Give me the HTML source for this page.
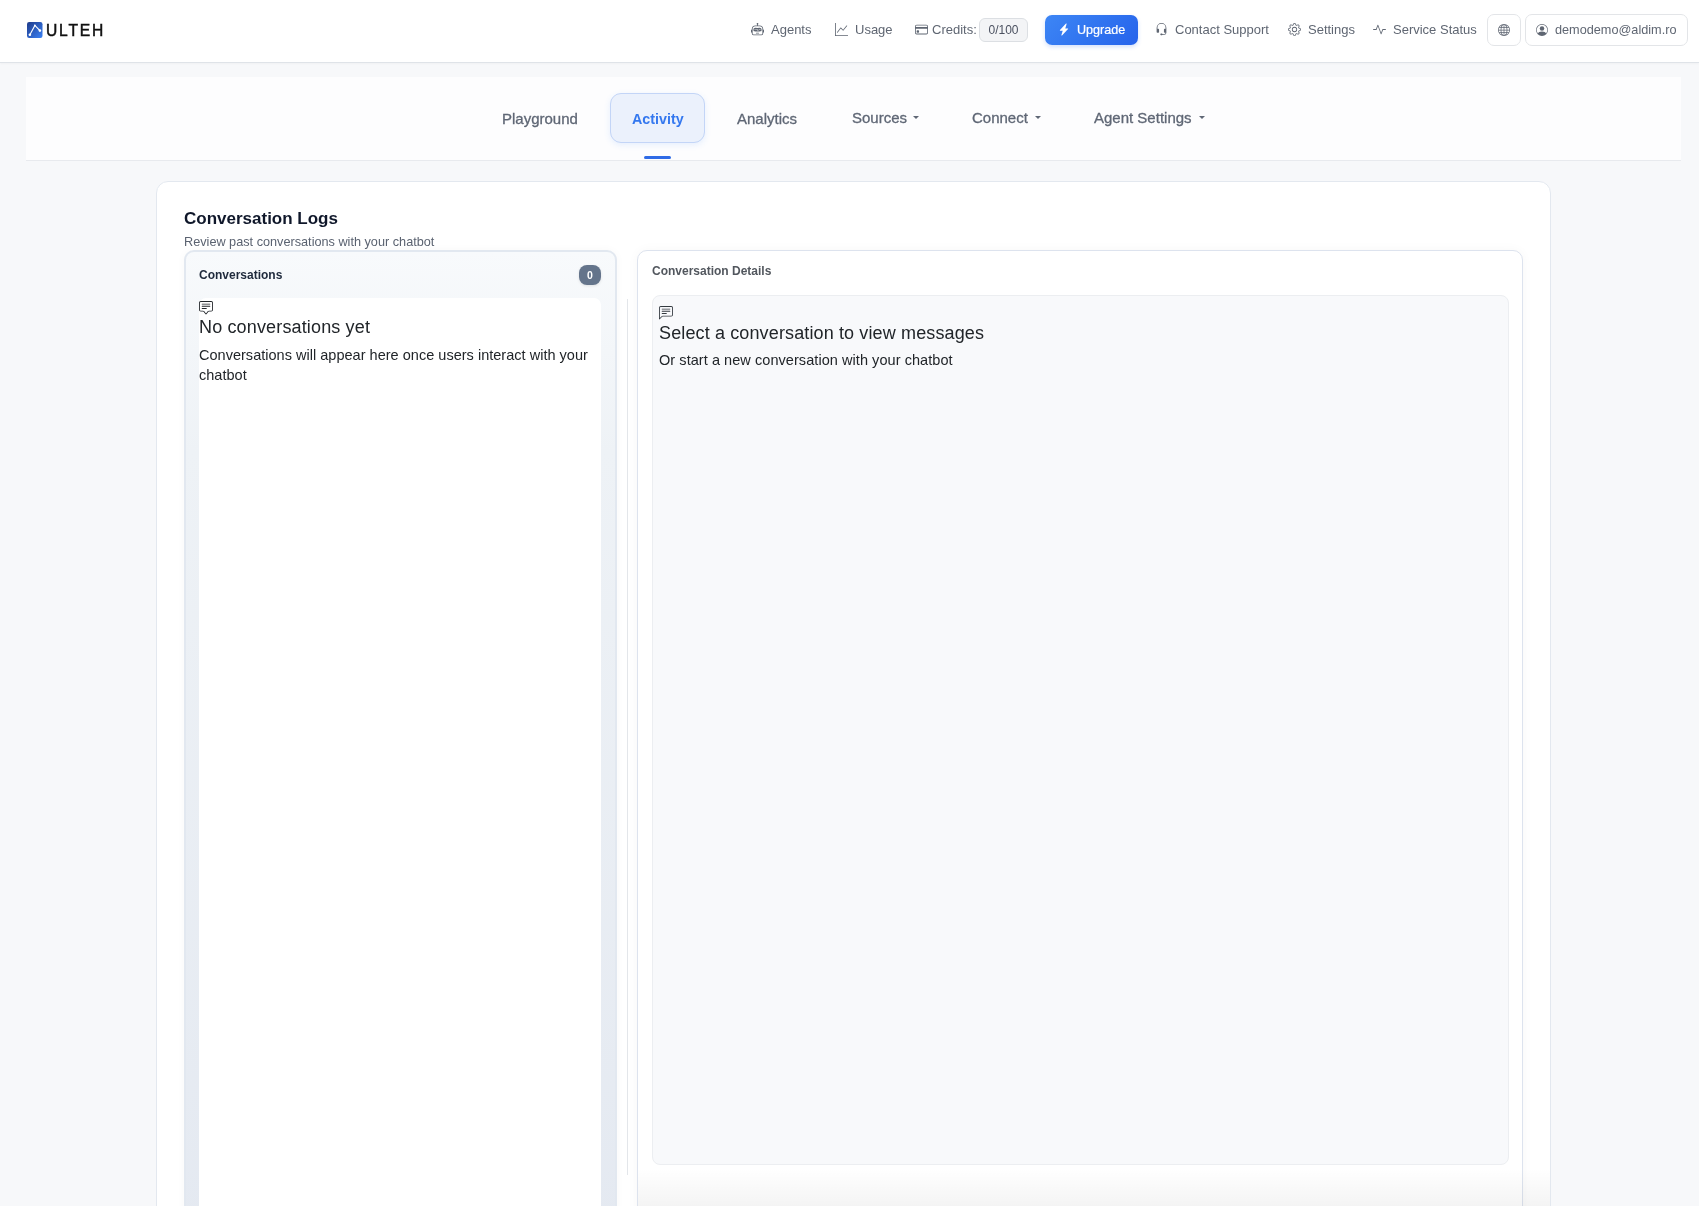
<!DOCTYPE html>
<html>
<head>
<meta charset="utf-8">
<style>
*{box-sizing:border-box;margin:0;padding:0}
html,body{width:1699px;height:1206px;overflow:hidden}
body{will-change:transform;background:#f7f8fa;font-family:"Liberation Sans",sans-serif;position:relative;color:#212529}
.abs{position:absolute}
.t{position:absolute;white-space:nowrap;line-height:16px}
#hdr{position:absolute;left:0;top:0;width:1699px;height:63px;background:#fff;border-bottom:1px solid #dfe3e8;box-shadow:0 1px 2px rgba(0,0,0,.03)}
.hi{position:absolute;font-size:13px;color:#5f6672;line-height:16px;white-space:nowrap}
.ic{position:absolute}
.badge{position:absolute;left:979px;top:18px;width:49px;height:24px;border:1px solid #dcdfe3;background:#f3f4f6;border-radius:6px;font-size:12px;color:#4b5160;text-align:center;line-height:23px}
.upg{position:absolute;left:1045px;top:15px;width:93px;height:30px;border-radius:7px;background:linear-gradient(135deg,#3d86f5,#2563eb);box-shadow:0 2px 4px rgba(37,99,235,.2)}
.obtn{position:absolute;top:14px;height:32px;border:1px solid #e3e5e8;border-radius:7px;background:#fff}
#nav{position:absolute;left:26px;top:77px;width:1655px;height:84px;background:#fdfdfe;border-bottom:1px solid #e8eaee}
.tab{position:absolute;font-size:15px;color:#5f6775;line-height:18px;white-space:nowrap;-webkit-text-stroke:.3px #5f6775}
.pill{position:absolute;left:610px;top:93px;width:95px;height:50px;border-radius:11px;background:#ebf1fc;border:1px solid #c3d5f7;box-shadow:0 2px 6px rgba(59,130,246,.12)}
.caret{position:absolute;width:0;height:0;border-left:3px solid transparent;border-right:3px solid transparent;border-top:3.5px solid #5f6775}
#card{position:absolute;left:156px;top:181px;width:1395px;height:1100px;background:#fff;border:1px solid #e3e8ef;border-radius:12px}
#lp{position:absolute;left:184px;top:250px;width:433px;height:1000px;border:2px solid #e2e8f0;border-radius:10px;background:linear-gradient(180deg,#f8fafc 0%,#eef2f6 20%,#e4e9f1 100%);box-shadow:0 0 10px rgba(0,0,0,.03)}
#list{position:absolute;left:199px;top:298px;width:402px;height:950px;background:#fff;border-radius:7px}
#div{position:absolute;left:627px;top:299px;width:1px;height:876px;background:#e3e6ea}
#rp{position:absolute;left:637px;top:250px;width:886px;height:1000px;border:1px solid #dde3ee;border-radius:10px;background:#fff;box-shadow:0 0 12px rgba(0,0,0,.035)}
#box{position:absolute;left:652px;top:295px;width:857px;height:870px;background:#f8f9fb;border:1px solid #eceef1;border-radius:8px}
</style>
</head>
<body>
<div id="hdr"></div>
<!-- logo -->
<svg class="ic" style="left:27px;top:22px" width="16" height="16" viewBox="0 0 16 16">
  <defs><linearGradient id="lg" x1="0" y1="0" x2="1" y2="1"><stop offset="0" stop-color="#1e3a8a"/><stop offset="1" stop-color="#3b82f6"/></linearGradient></defs>
  <rect x="0" y="0" width="15.5" height="16" rx="2.2" fill="url(#lg)"/>
  <polyline points="2.9,12.7 7.9,3.4 12.9,8.6" fill="none" stroke="#fff" stroke-width="1.1"/>
  <circle cx="2.9" cy="12.7" r="1.3" fill="#fff"/><circle cx="7.9" cy="3.4" r="0.9" fill="#fff"/><circle cx="12.9" cy="8.6" r="1.3" fill="#fff"/>
</svg>
<div class="t" style="left:46px;top:21px;font-size:15.6px;letter-spacing:1.85px;color:#111;line-height:20px;-webkit-text-stroke:.5px #111">ULTEH</div>

<!-- header nav -->
<svg class="ic" style="left:751px;top:23px" width="13" height="13" viewBox="0 0 16 16" fill="#5f6672"><path d="M6 12.5a.5.5 0 0 1 .5-.5h3a.5.5 0 0 1 0 1h-3a.5.5 0 0 1-.5-.5M3 8.062C3 6.76 4.235 5.765 5.53 5.886a26.6 26.6 0 0 0 4.94 0C11.765 5.765 13 6.760 13 8.062v1.157a.93.93 0 0 1-.765.935c-.845.147-2.34.346-4.235.346s-3.390-.2-4.235-.346A.93.93 0 0 1 3 9.219zm4.542-.827a.25.25 0 0 0-.217.068l-.92.9a25 25 0 0 1-1.871-.183.25.25 0 0 0-.068.495c.55.076 1.232.149 2.02.193a.25.25 0 0 0 .189-.071l.754-.736.847 1.71a.25.25 0 0 0 .404.062l.932-.97a25 25 0 0 0 1.922-.188.25.25 0 0 0-.068-.495c-.538.074-1.207.145-1.98.189a.25.25 0 0 0-.166.076l-.754.785-.842-1.7a.25.25 0 0 0-.182-.135"/><path d="M8.5 1.866a1 1 0 1 0-1 0V3h-2A4.5 4.5 0 0 0 1 7.5V8a1 1 0 0 0-1 1v2a1 1 0 0 0 1 1v1a2 2 0 0 0 2 2h10a2 2 0 0 0 2-2v-1a1 1 0 0 0 1-1V9a1 1 0 0 0-1-1v-.5A4.5 4.5 0 0 0 10.5 3h-2zM14 7.5V13a1 1 0 0 1-1 1H3a1 1 0 0 1-1-1V7.5A3.5 3.5 0 0 1 5.5 4h5A3.5 3.5 0 0 1 14 7.5"/></svg>
<div class="hi" style="left:771px;top:22px">Agents</div>
<svg class="ic" style="left:835px;top:23px" width="13" height="13" viewBox="0 0 16 16" fill="#5f6672"><path d="M0 0h1v15h15v1H0zm14.817 3.113a.5.5 0 0 1 .07.704l-4.5 5.5a.5.5 0 0 1-.74.037L7.06 6.767l-3.656 5.027a.5.5 0 0 1-.808-.588l4-5.5a.5.5 0 0 1 .758-.06l2.609 2.61 4.15-5.073a.5.5 0 0 1 .704-.07"/></svg>
<div class="hi" style="left:855px;top:22px">Usage</div>
<svg class="ic" style="left:915px;top:23px" width="13" height="13" viewBox="0 0 16 16" fill="#5f6672"><path d="M0 4a2 2 0 0 1 2-2h12a2 2 0 0 1 2 2v8a2 2 0 0 1-2 2H2a2 2 0 0 1-2-2zm2-1a1 1 0 0 0-1 1v1h14V4a1 1 0 0 0-1-1zm13 4H1v5a1 1 0 0 0 1 1h12a1 1 0 0 0 1-1z"/><path d="M2 10a1 1 0 0 1 1-1h1a1 1 0 0 1 1 1v1a1 1 0 0 1-1 1H3a1 1 0 0 1-1-1z"/></svg>
<div class="hi" style="left:932px;top:22px">Credits:</div>
<div class="badge">0/100</div>
<div class="upg"></div>
<svg class="ic" style="left:1058px;top:23px" width="12" height="13" viewBox="0 0 16 16" fill="#fff"><path d="M11.251.068a.5.5 0 0 1 .227.58L9.677 6.5H13a.5.5 0 0 1 .364.843l-8 8.5a.5.5 0 0 1-.842-.49L6.323 9.5H3a.5.5 0 0 1-.364-.843l8-8.5a.5.5 0 0 1 .615-.09z"/></svg>
<div class="hi" style="left:1077px;top:22px;color:#fff;font-size:12.6px;-webkit-text-stroke:.2px #fff">Upgrade</div>
<svg class="ic" style="left:1155px;top:23px" width="13" height="13" viewBox="0 0 16 16" fill="#5f6672"><path d="M8 1a5 5 0 0 0-5 5v1h1a1 1 0 0 1 1 1v3a1 1 0 0 1-1 1H3a1 1 0 0 1-1-1V6a6 6 0 1 1 12 0v6a2.5 2.5 0 0 1-2.5 2.5H9.366a1 1 0 0 1-.866.5h-1a1 1 0 1 1 0-2h1a1 1 0 0 1 .866.5H11.5A1.5 1.5 0 0 0 13 12h-1a1 1 0 0 1-1-1V8a1 1 0 0 1 1-1h1V6a5 5 0 0 0-5-5"/></svg>
<div class="hi" style="left:1175px;top:22px">Contact Support</div>
<svg class="ic" style="left:1288px;top:23px" width="13" height="13" viewBox="0 0 16 16" fill="#5f6672"><path d="M8 4.754a3.246 3.246 0 1 0 0 6.492 3.246 3.246 0 0 0 0-6.492M5.754 8a2.246 2.246 0 1 1 4.492 0 2.246 2.246 0 0 1-4.492 0"/><path d="M9.796 1.343c-.527-1.79-3.065-1.79-3.592 0l-.094.319a.873.873 0 0 1-1.255.52l-.292-.16c-1.64-.892-3.433.902-2.54 2.541l.159.292a.873.873 0 0 1-.52 1.255l-.319.094c-1.79.527-1.79 3.065 0 3.592l.319.094a.873.873 0 0 1 .52 1.255l-.16.292c-.892 1.64.901 3.434 2.541 2.540l.292-.159a.873.873 0 0 1 1.255.52l.094.319c.527 1.79 3.065 1.79 3.592 0l.094-.319a.873.873 0 0 1 1.255-.52l.292.16c1.64.893 3.434-.902 2.54-2.541l-.159-.292a.873.873 0 0 1 .52-1.255l.319-.094c1.79-.527 1.79-3.065 0-3.592l-.319-.094a.873.873 0 0 1-.52-1.255l.16-.292c.893-1.64-.902-3.433-2.541-2.540l-.292.159a.873.873 0 0 1-1.255-.52zm-2.633.283c.246-.835 1.428-.835 1.674 0l.094.319a1.873 1.873 0 0 0 2.693 1.115l.291-.16c.764-.415 1.6.42 1.184 1.185l-.159.292a1.873 1.873 0 0 0 1.116 2.692l.318.094c.835.246.835 1.428 0 1.674l-.319.094a1.873 1.873 0 0 0-1.115 2.693l.16.291c.415.764-.42 1.6-1.185 1.184l-.291-.159a1.873 1.873 0 0 0-2.693 1.116l-.094.318c-.246.835-1.428.835-1.674 0l-.094-.319a1.873 1.873 0 0 0-2.692-1.115l-.292.16c-.764.415-1.6-.42-1.184-1.185l.159-.291A1.873 1.873 0 0 0 1.945 8.93l-.319-.094c-.835-.246-.835-1.428 0-1.674l.319-.094A1.873 1.873 0 0 0 3.06 4.377l-.16-.292c-.415-.764.42-1.6 1.185-1.184l.292.159a1.873 1.873 0 0 0 2.692-1.115z"/></svg>
<div class="hi" style="left:1308px;top:22px">Settings</div>
<svg class="ic" style="left:1373px;top:23px" width="13" height="13" viewBox="0 0 16 16" fill="#5f6672"><path d="M6 2a.5.5 0 0 1 .47.33L10 12.036l1.53-4.208A.5.5 0 0 1 12 7.5h3.5a.5.5 0 0 1 0 1h-3.15l-1.88 5.17a.5.5 0 0 1-.94 0L6 3.964 4.47 8.171A.5.5 0 0 1 4 8.5H.5a.5.5 0 0 1 0-1h3.15l1.88-5.17A.5.5 0 0 1 6 2"/></svg>
<div class="hi" style="left:1393px;top:22px">Service Status</div>
<div class="obtn" style="left:1487px;width:34px"></div>
<svg class="ic" style="left:1498px;top:24px" width="12" height="12" viewBox="0 0 16 16" fill="#5f6672"><path d="M0 8a8 8 0 1 1 16 0A8 8 0 0 1 0 8m7.5-6.923c-.67.204-1.335.82-1.887 1.855A8 8 0 0 0 5.145 4H7.5zM4.09 4a9.3 9.3 0 0 1 .64-1.539 7 7 0 0 1 .597-.933A7.03 7.03 0 0 0 2.255 4zm-.582 3.5c.03-.877.138-1.718.312-2.5H1.674a7 7 0 0 0-.656 2.5zM4.847 5a12.5 12.5 0 0 0-.338 2.5H7.5V5zM8.5 5v2.5h2.99a12.5 12.5 0 0 0-.337-2.5zM4.51 8.5a12.5 12.5 0 0 0 .337 2.5H7.5V8.5zm3.99 0V11h2.653c.187-.765.306-1.608.338-2.5zM5.145 12q.208.58.468 1.068c.552 1.035 1.218 1.65 1.887 1.855V12zm.182 2.472a7 7 0 0 1-.597-.933A9.3 9.3 0 0 1 4.09 12H2.255a7 7 0 0 0 3.072 2.472M3.82 11a13.7 13.7 0 0 1-.312-2.5h-2.49c.062.89.291 1.733.656 2.5zm6.853 3.472A7 7 0 0 0 13.745 12H11.91a9.3 9.3 0 0 1-.64 1.539 7 7 0 0 1-.597.933M8.5 12v2.923c.67-.204 1.335-.82 1.887-1.855q.26-.487.468-1.068zm3.68-1h2.146c.365-.767.594-1.61.656-2.5h-2.49a13.7 13.7 0 0 1-.312 2.5m2.802-3.5a7 7 0 0 0-.656-2.5H12.18c.174.782.282 1.623.312 2.5zM11.27 2.461c.247.464.462.98.64 1.539h1.835a7 7 0 0 0-3.072-2.472c.218.284.418.598.597.933M10.855 4a8 8 0 0 0-.468-1.068C9.835 1.897 9.17 1.282 8.5 1.077V4z"/></svg>
<div class="obtn" style="left:1525px;width:163px"></div>
<svg class="ic" style="left:1536px;top:24px" width="12" height="12" viewBox="0 0 16 16" fill="#5f6672"><path d="M11 6a3 3 0 1 1-6 0 3 3 0 0 1 6 0"/><path d="M0 8a8 8 0 1 1 16 0A8 8 0 0 1 0 8m8-7a7 7 0 0 0-5.468 11.37C3.242 11.226 4.805 10 8 10s4.757 1.225 5.468 2.37A7 7 0 0 0 8 1"/></svg>
<div class="hi" style="left:1555px;top:22px;font-size:12.7px">demodemo@aldim.ro</div>

<!-- tabs nav -->
<div id="nav"></div>
<div class="pill"></div>
<div class="abs" style="left:644px;top:156px;width:27px;height:3px;border-radius:2px;background:#2f6be6"></div>
<div class="tab" style="left:502px;top:110px">Playground</div>
<div class="tab" style="left:632px;top:110px;color:#3478ef;font-weight:bold;font-size:14.3px;-webkit-text-stroke:0">Activity</div>
<div class="tab" style="left:737px;top:110px">Analytics</div>
<div class="tab" style="left:852px;top:109px">Sources</div>
<div class="caret" style="left:913px;top:116px"></div>
<div class="tab" style="left:972px;top:109px">Connect</div>
<div class="caret" style="left:1035px;top:116px"></div>
<div class="tab" style="left:1094px;top:109px">Agent Settings</div>
<div class="caret" style="left:1199px;top:116px"></div>

<!-- main card -->
<div id="card"></div>
<div class="t" style="left:184px;top:209px;font-size:17px;font-weight:bold;color:#0f172a;line-height:20px">Conversation Logs</div>
<div class="t" style="left:184px;top:235px;font-size:12.7px;color:#5a6270;line-height:15px">Review past conversations with your chatbot</div>

<div id="lp"></div>
<div class="t" style="left:199px;top:268px;font-size:12px;font-weight:bold;color:#1e293b;line-height:15px">Conversations</div>
<div class="abs" style="left:579px;top:265px;width:22px;height:20px;border-radius:8px;background:#64748b;color:#fff;font-size:10.5px;font-weight:bold;text-align:center;line-height:20px;box-shadow:0 1px 3px rgba(0,0,0,.1)">0</div>
<div id="list"></div>
<svg class="ic" style="left:199px;top:301px" width="14" height="14" viewBox="0 0 16 16" fill="#212529"><path d="M14 1a1 1 0 0 1 1 1v8a1 1 0 0 1-1 1h-2.5a2 2 0 0 0-1.6.8L8 14.333 6.1 11.8a2 2 0 0 0-1.6-.8H2a1 1 0 0 1-1-1V2a1 1 0 0 1 1-1zM2 0a2 2 0 0 0-2 2v8a2 2 0 0 0 2 2h2.5a1 1 0 0 1 .8.4l1.9 2.533a1 1 0 0 0 1.6 0l1.9-2.533a1 1 0 0 1 .8-.4H14a2 2 0 0 0 2-2V2a2 2 0 0 0-2-2z"/><path d="M3 3.5a.5.5 0 0 1 .5-.5h9a.5.5 0 0 1 0 1h-9a.5.5 0 0 1-.5-.5M3 6a.5.5 0 0 1 .5-.5h9a.5.5 0 0 1 0 1h-9A.5.5 0 0 1 3 6m0 2.5a.5.5 0 0 1 .5-.5h5a.5.5 0 0 1 0 1h-5a.5.5 0 0 1-.5-.5"/></svg>
<div class="t" style="left:199px;top:317px;font-size:18px;letter-spacing:.15px;color:#212529;line-height:21px">No conversations yet</div>
<div class="abs" style="left:199px;top:345px;width:400px;font-size:14.5px;letter-spacing:.02px;color:#212529;line-height:20px">Conversations will appear here once users interact with your chatbot</div>

<div id="div"></div>

<div id="rp"></div>
<div class="t" style="left:652px;top:264px;font-size:12px;font-weight:bold;color:#52575e;line-height:15px">Conversation Details</div>
<div id="box"></div>
<svg class="ic" style="left:659px;top:306px" width="14" height="14" viewBox="0 0 16 16" fill="#343a40"><path d="M14 1a1 1 0 0 1 1 1v8a1 1 0 0 1-1 1H4.414A2 2 0 0 0 3 11.586l-2 2V2a1 1 0 0 1 1-1zM2 0a2 2 0 0 0-2 2v12.793a.5.5 0 0 0 .854.353l2.853-2.853A1 1 0 0 1 4.414 12H14a2 2 0 0 0 2-2V2a2 2 0 0 0-2-2z"/><path d="M3 3.5a.5.5 0 0 1 .5-.5h9a.5.5 0 0 1 0 1h-9a.5.5 0 0 1-.5-.5M3 6a.5.5 0 0 1 .5-.5h9a.5.5 0 0 1 0 1h-9A.5.5 0 0 1 3 6m0 2.5a.5.5 0 0 1 .5-.5h5a.5.5 0 0 1 0 1h-5a.5.5 0 0 1-.5-.5"/></svg>
<div class="t" style="left:659px;top:323px;font-size:18px;letter-spacing:.13px;color:#212529;line-height:21px">Select a conversation to view messages</div>
<div class="t" style="left:659px;top:350px;font-size:14.5px;letter-spacing:.06px;color:#212529;line-height:20px">Or start a new conversation with your chatbot</div>
<div class="abs" style="left:638px;top:1168px;width:912px;height:38px;background:linear-gradient(180deg,rgba(0,0,0,0),rgba(0,0,0,.045))"></div>
</body>
</html>
